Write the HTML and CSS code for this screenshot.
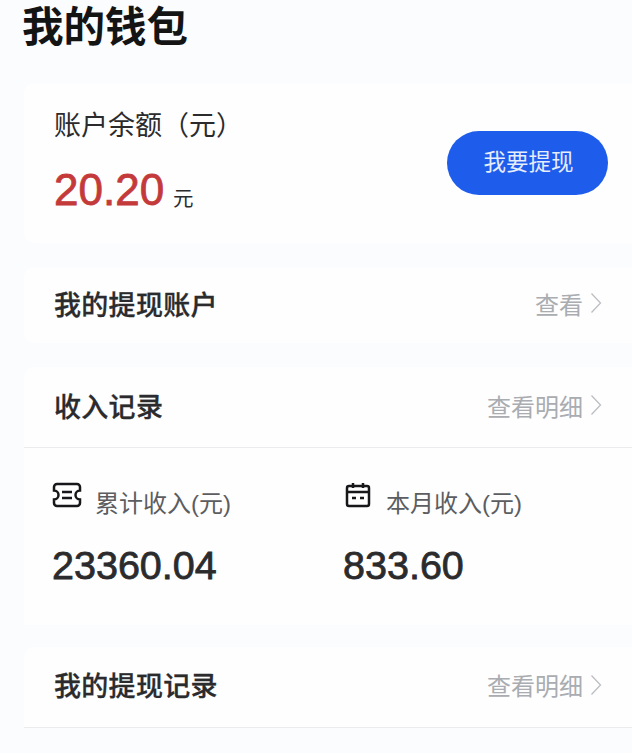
FILE: index.html
```html
<!DOCTYPE html>
<html lang="zh">
<head>
<meta charset="utf-8">
<title>我的钱包</title>
<link rel="stylesheet" href="styles.css">
</head>
<body>
<main class="page">
  <h1 class="title">我的钱包</h1>
  <section class="card balance">
    <div class="balance-info">
      <div class="balance-label">账户余额（元）</div>
      <div class="balance-value"><span class="amount">20.20</span><span class="unit">元</span></div>
    </div>
    <button class="withdraw">我要提现</button>
  </section>
  <section class="card row account-row">
    <span class="row-title">我的提现账户</span>
    <span class="link">查看<svg class="chev" viewBox="0 0 12 22"><path d="M1.500 1.500 10.500 11 1.500 20.500"/></svg></span>
  </section>
  <section class="card income">
    <div class="row income-head">
      <span class="row-title">收入记录</span>
      <span class="link">查看明细<svg class="chev" viewBox="0 0 12 22"><path d="M1.500 1.500 10.500 11 1.500 20.500"/></svg></span>
    </div>
    <div class="stats">
      <div class="stat">
        <div class="stat-label">
          <svg class="stat-icon" viewBox="0 0 30 26"><path d="M5 2h20a3 3 0 0 1 3 3v3.500a4.500 4.500 0 0 0 0 9V21a3 3 0 0 1-3 3H5a3 3 0 0 1-3-3v-3.500a4.500 4.500 0 0 0 0-9V5a3 3 0 0 1 3-3Z"/><path d="M10 10h10M10 16h10"/></svg>
          <span>累计收入(元)</span>
        </div>
        <div class="stat-value">23360.04</div>
      </div>
      <div class="stat">
        <div class="stat-label">
          <svg class="stat-icon" viewBox="0 0 26 26"><rect x="2" y="4" width="22" height="20" rx="2"/><path d="M2 10h22M8 1v5M18 1v5M7 16h4M15 16h4"/></svg>
          <span>本月收入(元)</span>
        </div>
        <div class="stat-value">833.60</div>
      </div>
    </div>
  </section>
  <section class="card row records-row">
    <span class="row-title">我的提现记录</span>
    <span class="link">查看明细<svg class="chev" viewBox="0 0 12 22"><path d="M1.500 1.500 10.500 11 1.500 20.500"/></svg></span>
  </section>
</main>
</body>
</html>
```
FILE: styles.css
```css
* { box-sizing: border-box; }
html, body { margin: 0; padding: 0; }
body {
  width: 632px;
  height: 753px;
  overflow: hidden;
  background: #fafcfe;
  font-family: "Liberation Sans", "Noto Sans CJK SC", sans-serif;
  color: #2b2b2d;
}
.page {
  display: flex;
  flex-direction: column;
  padding-left: 24px;
}
.title {
  margin: 0 0 0 -2px;
  height: 83px;
  padding-top: 5px;
  font-size: 41.500px;
  line-height: 46px;
  font-weight: 700;
  color: #141414;
}
.card { background: #fefeff; border-radius: 10px 0 0 10px; }
.balance {
  height: 160px;
  padding: 0 24px 0 30px;
  display: flex;
  align-items: center;
  justify-content: space-between;
}
.balance-label { font-size: 27px; line-height: 36px; margin-top: -4px; }
.balance-value { display: flex; align-items: baseline; margin-top: 21px; }
.amount {
  font-size: 44px;
  line-height: 50px;
  font-weight: 500;
  color: #c43a3a;
  -webkit-text-stroke: 0.8px #c43a3a;
}
.unit { font-size: 20.500px; margin-left: 9px; position: relative; top: 1px; }
.withdraw {
  width: 161px;
  height: 64px;
  padding: 0 0 7px 2px;
  border: 0;
  border-radius: 32px;
  background: #1e5ceb;
  color: #e6edfb;
  font: inherit;
  font-size: 22.500px;
}
.row {
  display: flex;
  align-items: center;
  justify-content: space-between;
  padding: 0 30px;
}
.account-row { height: 76px; margin-top: 24px; padding-bottom: 4px; }
.row-title { font-size: 27px; letter-spacing: 0.3px; font-weight: 500; -webkit-text-stroke: 0.3px #2b2b2d; }
.link {
  display: flex;
  align-items: center;
  gap: 7px;
  font-size: 24px;
  color: #a9acb0;
}
.chev { width: 12px; height: 22px; fill: none; stroke: #bcbec1; stroke-width: 1.300; }
.income { margin-top: 24px; border-radius: 10px 0 0 0; }
.income-head { height: 81px; padding-bottom: 4px; border-bottom: 1px solid #ececee; }
.stats {
  display: grid;
  grid-template-columns: 291px 1fr;
  padding: 34px 0 0 28px;
  height: 177px;
}
.stat-label { display: flex; align-items: flex-start; gap: 13px; font-size: 24px; color: #5c5d60; }
.stat-label span { margin-top: 7px; line-height: 30px; }
.stat-icon { width: 30px; height: 26px; fill: none; stroke: #17171a; stroke-width: 2.500; }
.stat-value {
  margin-top: 24px;
  font-size: 39.500px;
  line-height: 44px;
  font-weight: 500;
  -webkit-text-stroke: 0.8px #2b2b2d;
  color: #2b2b2d;
}
.records-row { height: 81px; padding-bottom: 5px; border-bottom: 1px solid #ececee; margin-top: 22px; border-radius: 10px 0 0 0; }
```
